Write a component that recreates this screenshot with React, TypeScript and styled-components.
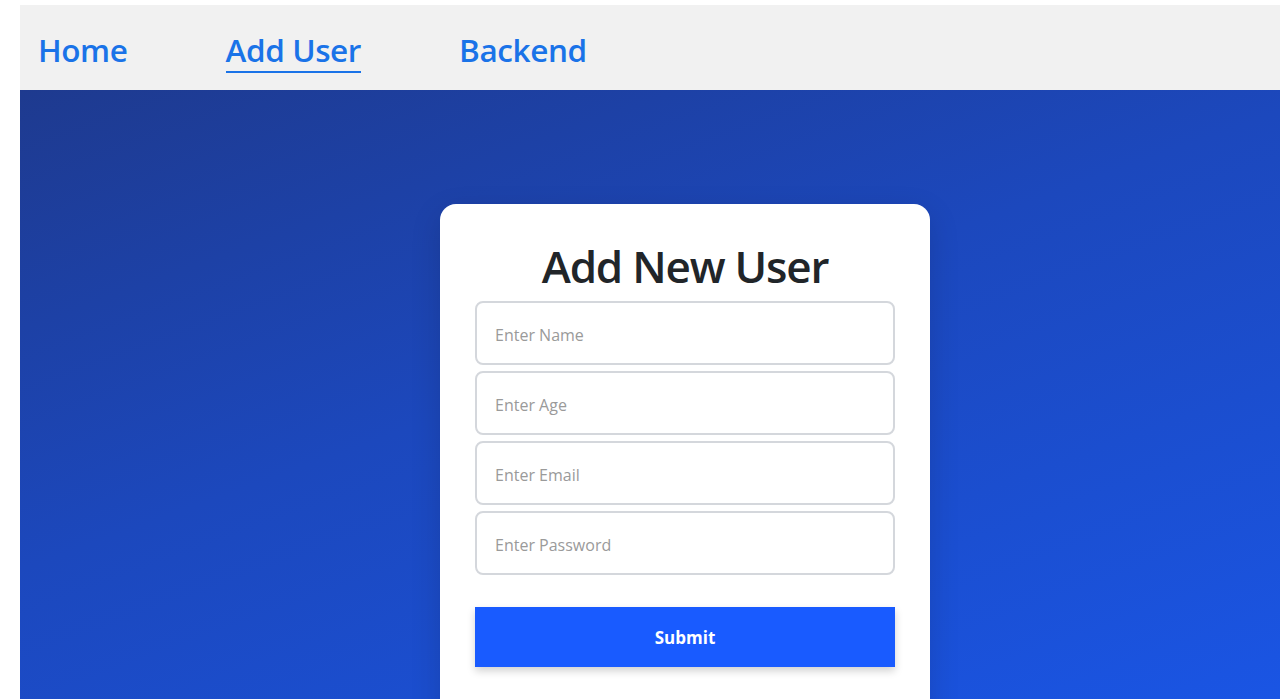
import React from 'react';
import styled, { createGlobalStyle } from 'styled-components';

const Global = createGlobalStyle`
  html, body { height: 100%; }
  body {
    margin: 5px 0 0 20px;
    font-family: "Open Sans", "Noto Sans", sans-serif;
    background: #ffffff;
    overflow: hidden;
  }
  * { box-sizing: border-box; }
`;

const links = ['Home', 'Add User', 'Backend'];

export default function App() {
  return (
    <>
      <Global />
      <Nav>
        {links.map((l) => (
          <NavLink key={l} $active={l === 'Add User'}>{l}</NavLink>
        ))}
      </Nav>
      <Hero>
        <Card>
          <Title>Add New User</Title>
          <Form onSubmit={(e) => e.preventDefault()}>
            <Field type="text" placeholder="Enter Name" />
            <Field type="number" placeholder="Enter Age" />
            <Field type="email" placeholder="Enter Email" />
            <Field type="password" placeholder="Enter Password" />
            <SubmitBtn type="submit">Submit</SubmitBtn>
          </Form>
        </Card>
      </Hero>
    </>
  );
}

const Nav = styled.nav`
  height: 85px;
  background: #f1f1f1;
  display: flex;
  align-items: center;
  gap: 98px;
  padding: 0 18px;
`;

const NavLink = styled.a<{ $active?: boolean }>`
  font-size: 31.5px;
  font-weight: 600;
  color: #1a73e8;
  text-decoration: none;
  letter-spacing: -0.4px;
  cursor: pointer;
  padding-bottom: 0;
  border-bottom: 2px solid ${(p) => (p.$active ? '#1a73e8' : 'transparent')};
  margin-top: 6px;
`;

const Hero = styled.main`
  height: 609px;
  overflow: hidden;
  background: linear-gradient(160deg, #1e3a8f 0%, #1c48bd 45%, #1a55e4 100%);
  display: flex;
  justify-content: center;
  padding: 114px 0 0 70px;
`;

const Card = styled.div`
  width: 490px;
  height: 520px;
  flex-shrink: 0;
  background: #ffffff;
  border-radius: 16px;
  padding: 30px 35px;
  box-shadow: 0 10px 30px rgba(0, 0, 0, 0.15);
`;

const Title = styled.h1`
  margin: 0 0 3px;
  text-align: center;
  font-size: 44px;
  font-weight: 600;
  letter-spacing: -1.2px;
  color: #212529;
  line-height: 64px;
`;

const Form = styled.form`
  display: flex;
  flex-direction: column;
  gap: 6px;
`;

const Field = styled.input`
  height: 64px;
  width: 100%;
  border: 2px solid #d4d7dc;
  border-radius: 8px;
  padding: 4px 18px 0;
  font-family: inherit;
  font-size: 16px;
  color: #333;
  outline: none;
  &::placeholder { color: #9a9a9a; }
  &::-webkit-outer-spin-button,
  &::-webkit-inner-spin-button { -webkit-appearance: none; margin: 0; }
`;

const SubmitBtn = styled.button`
  margin-top: 26px;
  height: 60px;
  width: 100%;
  border: none;
  background: #195bff;
  color: #ffffff;
  font-family: inherit;
  font-size: 17px;
  font-weight: 700;
  cursor: pointer;
  box-shadow: 0 4px 8px rgba(0, 0, 0, 0.18);
`;
